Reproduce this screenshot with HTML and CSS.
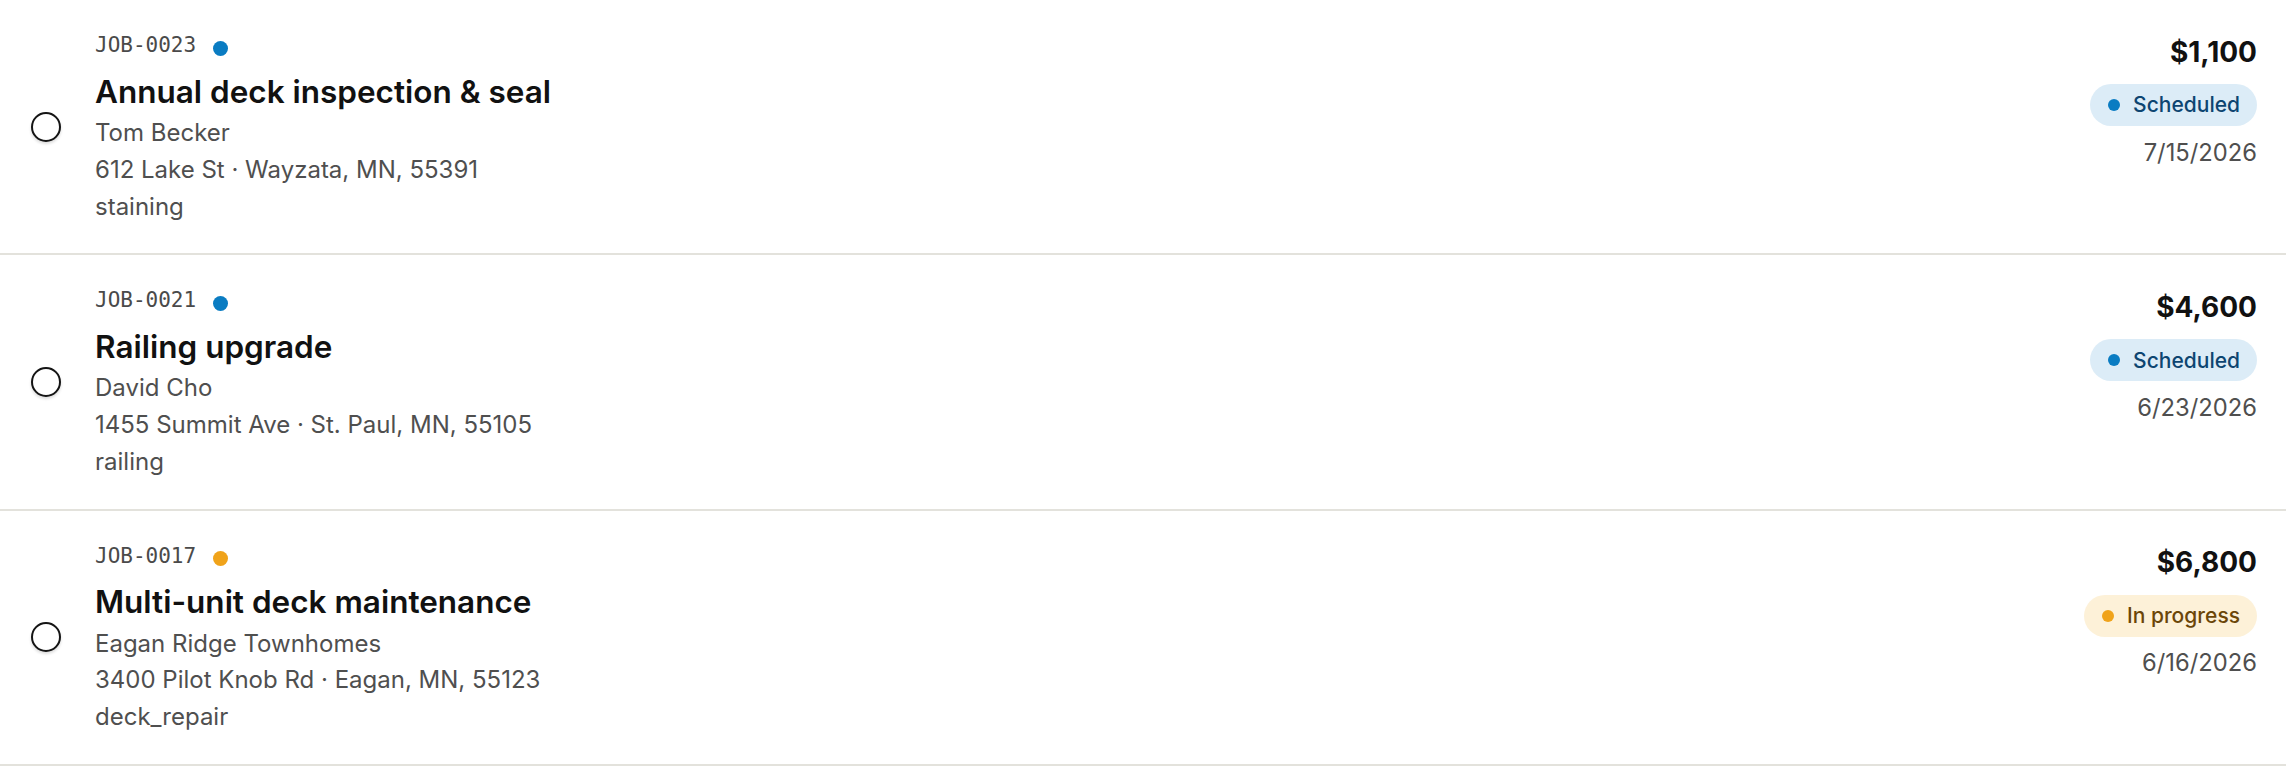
FILE: index.html
```html
<!DOCTYPE html>
<html lang="en">
<head>
<meta charset="utf-8">
<title>Jobs</title>
<link rel="stylesheet" href="styles.css">
</head>
<body>
<ul class="job-list">
  <li class="job">
    <span class="check"></span>
    <div class="job-main">
      <div class="job-meta"><span class="job-id">JOB-0023</span><span class="status-dot scheduled"></span></div>
      <h3 class="job-title">Annual deck inspection &amp; seal</h3>
      <p class="job-line">Tom Becker</p>
      <p class="job-line">612 Lake St · Wayzata, MN, 55391</p>
      <p class="job-line">staining</p>
    </div>
    <div class="job-side">
      <span class="price">$1,100</span>
      <span class="badge scheduled"><span class="badge-dot"></span>Scheduled</span>
      <span class="date">7/15/2026</span>
    </div>
  </li>
  <li class="job">
    <span class="check"></span>
    <div class="job-main">
      <div class="job-meta"><span class="job-id">JOB-0021</span><span class="status-dot scheduled"></span></div>
      <h3 class="job-title">Railing upgrade</h3>
      <p class="job-line">David Cho</p>
      <p class="job-line">1455 Summit Ave · St. Paul, MN, 55105</p>
      <p class="job-line">railing</p>
    </div>
    <div class="job-side">
      <span class="price">$4,600</span>
      <span class="badge scheduled"><span class="badge-dot"></span>Scheduled</span>
      <span class="date">6/23/2026</span>
    </div>
  </li>
  <li class="job">
    <span class="check"></span>
    <div class="job-main">
      <div class="job-meta"><span class="job-id">JOB-0017</span><span class="status-dot progress"></span></div>
      <h3 class="job-title">Multi-unit deck maintenance</h3>
      <p class="job-line">Eagan Ridge Townhomes</p>
      <p class="job-line">3400 Pilot Knob Rd · Eagan, MN, 55123</p>
      <p class="job-line">deck_repair</p>
    </div>
    <div class="job-side">
      <span class="price">$6,800</span>
      <span class="badge progress"><span class="badge-dot"></span>In progress</span>
      <span class="date">6/16/2026</span>
    </div>
  </li>
</ul>
</body>
</html>
```

FILE: styles.css
```css
* { box-sizing: border-box; }

body {
  margin: 0;
  background: #ffffff;
  font-family: Inter, "Noto Sans", sans-serif;
  color: #111111;
}

.job-list {
  list-style: none;
  margin: 0;
  padding: 0;
}

.job {
  display: grid;
  grid-template-columns: 30px 1fr auto;
  column-gap: 34px;
  padding: 30px 29px 28px 31px;
  border-bottom: 2px solid #e3e2dc;
}

.check {
  align-self: center;
  width: 30px;
  height: 30px;
  margin-top: -2px;
  border: 2.5px solid #141414;
  border-radius: 50%;
  background: #fff;
  box-shadow: 0 2px 3px rgba(0, 0, 0, 0.14);
}

.job-main {
  min-width: 0;
}

.job-meta {
  display: flex;
  align-items: center;
  gap: 17px;
  height: 31.5px;
}

.job-id {
  font-family: "DejaVu Sans Mono", "Liberation Mono", monospace;
  font-size: 21px;
  line-height: 31.5px;
  color: #4a4a4a;
}

.status-dot {
  width: 15px;
  height: 15px;
  border-radius: 50%;
  margin-top: 5px;
}

.status-dot.scheduled { background: #0a7cc2; }
.status-dot.progress { background: #f0a31a; }

.job-title {
  margin: 10px 0 3.5px;
  font-size: 31.5px;
  line-height: 40px;
  font-weight: 600;
  color: #111111;
}

.job-line {
  margin: 0;
  font-size: 24px;
  line-height: 36.75px;
  color: #4f4f4f;
}

.job-side {
  display: flex;
  flex-direction: column;
  align-items: flex-end;
  gap: 11.5px;
  padding-top: 0.5px;
}

.price {
  font-size: 28px;
  line-height: 42px;
  font-weight: 700;
  color: #111111;
}

.badge {
  display: inline-flex;
  align-items: center;
  gap: 13px;
  height: 42px;
  padding: 0 17px 0 18px;
  border-radius: 999px;
  font-size: 21px;
  font-weight: 500;
  line-height: 31.5px;
}

.badge-dot {
  width: 12px;
  height: 12px;
  border-radius: 50%;
}

.badge.scheduled { background: #dcecf7; color: #0d4571; }
.badge.scheduled .badge-dot { background: #0a7cc2; }
.badge.progress { background: #fdf1d8; color: #6b4608; }
.badge.progress .badge-dot { background: #f0a31a; }

.date {
  font-size: 23.75px;
  line-height: 30px;
  color: #4f4f4f;
}
```
